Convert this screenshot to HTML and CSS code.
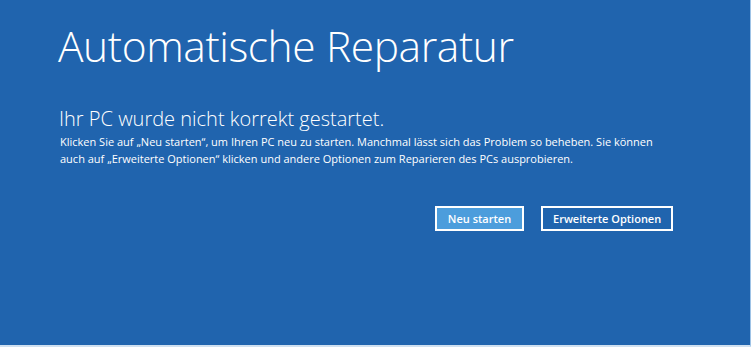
FILE: index.html
```html
<!DOCTYPE html>
<html lang="de">
<head>
<meta charset="utf-8">
<link rel="stylesheet" href="styles.css">
</head>
<body>
<main class="screen">
  <h1 class="title">Automatische Reparatur</h1>
  <h2 class="subtitle">Ihr PC wurde nicht korrekt gestartet.</h2>
  <p class="text">Klicken Sie auf „Neu starten“, um Ihren PC neu zu starten. Manchmal lässt sich das Problem so beheben. Sie können auch auf „Erweiterte Optionen“ klicken und andere Optionen zum Reparieren des PCs ausprobieren.</p>
  <div class="actions">
    <button class="btn btn-primary">Neu starten</button>
    <button class="btn">Erweiterte Optionen</button>
  </div>
</main>
</body>
</html>
```
FILE: styles.css
```css
html, body {
  margin: 0;
  padding: 0;
  height: 100%;
}
body {
  background: #2064ae;
  color: #ffffff;
  font-family: "Open Sans", "Noto Sans", sans-serif;
  overflow: hidden;
}
.screen {
  box-sizing: border-box;
  width: 751px;
  height: 347px;
  padding: 16px 0 0 58px;
  border-right: 1px solid #9fc3e6;
  border-bottom: 2px solid #cfe0f0;
}
.title {
  margin: 0;
  font-weight: 300;
  font-size: 42.5px;
  line-height: 60px;
  letter-spacing: -0.4px;
}
.subtitle {
  margin: 31px 0 0 1px;
  font-weight: 300;
  font-size: 20px;
  line-height: 24px;
}
.text {
  margin: 2px 0 0 2px;
  width: 620px;
  font-size: 11px;
  line-height: 17px;
}
.actions {
  display: flex;
  gap: 17px;
  margin: 39px 0 0 377px;
}
.btn {
  box-sizing: border-box;
  height: 25px;
  padding: 0 10px;
  border: 2px solid #ffffff;
  background: transparent;
  color: #ffffff;
  font-family: "Open Sans", "Noto Sans", sans-serif;
  font-weight: 600;
  font-size: 11px;
}
.btn-primary {
  width: 89px;
  background: #4c9ddc;
}
```
